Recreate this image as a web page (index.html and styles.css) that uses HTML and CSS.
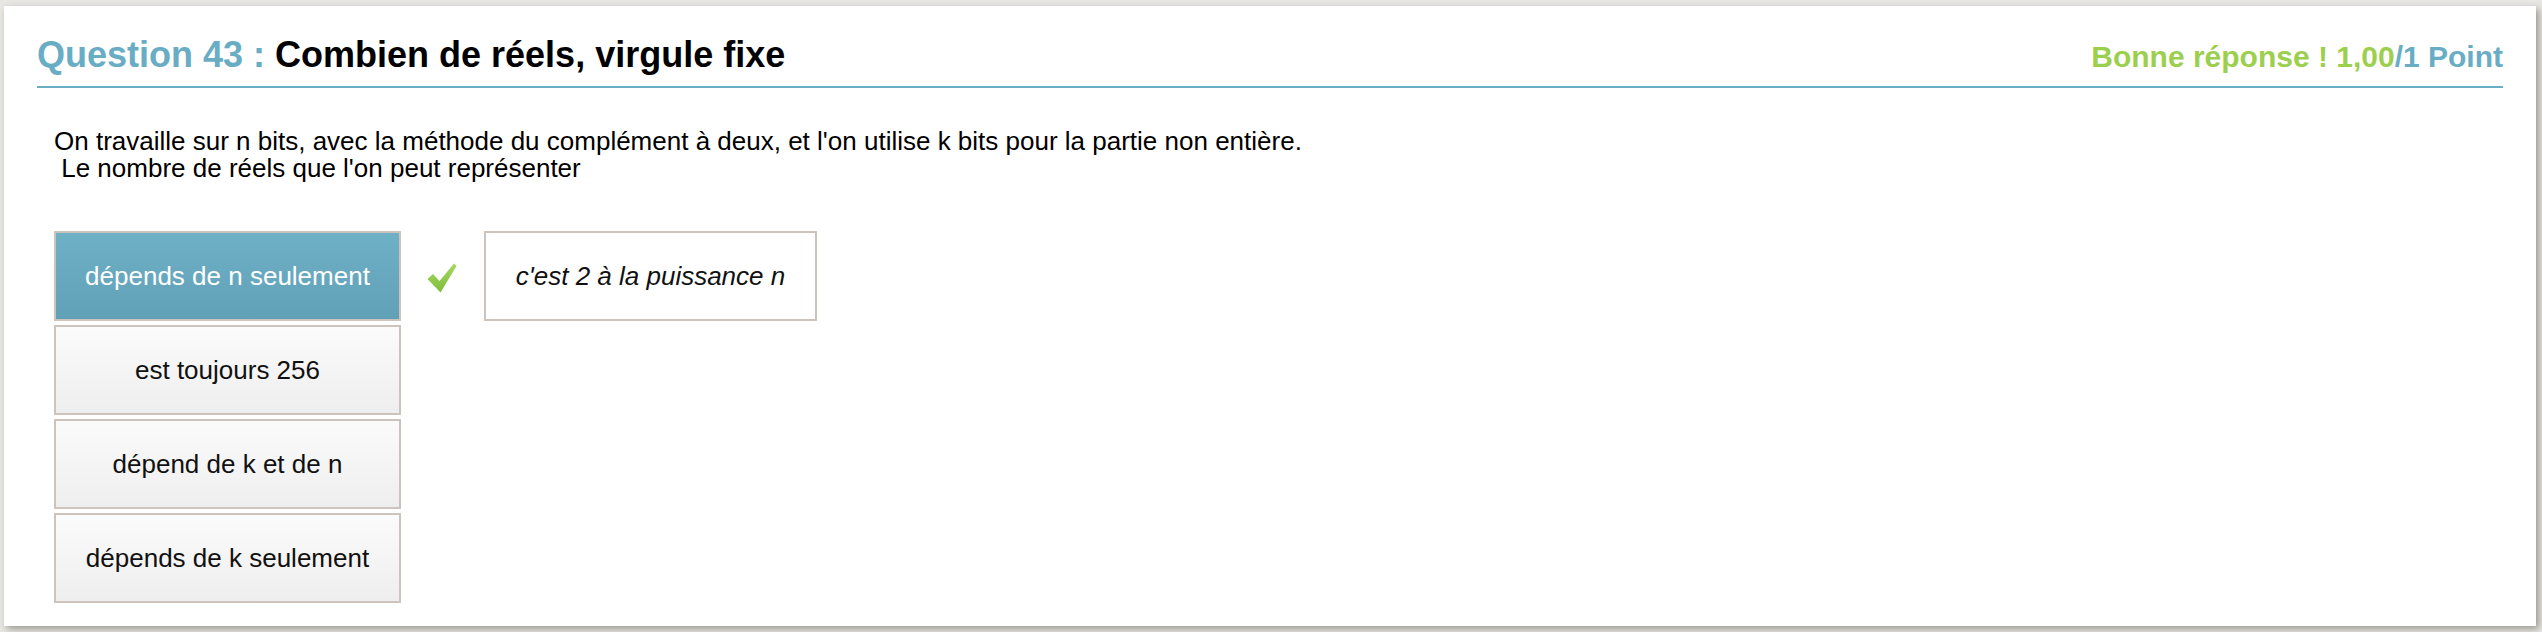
FILE: index.html
```html
<!DOCTYPE html>
<html lang="fr">
<head>
<meta charset="utf-8">
<title>Question 43</title>
<link rel="stylesheet" href="styles.css">
</head>
<body>
<div class="panel">
  <div class="header">
    <h1 class="title"><span class="qnum">Question 43 : </span>Combien de réels, virgule fixe</h1>
    <div class="score"><span class="good">Bonne réponse ! 1,00</span><span class="pts">/1 Point</span></div>
  </div>
  <p class="statement">On travaille sur n bits, avec la méthode du complément à deux, et l'on utilise k bits pour la partie non entière.<br><span class="indent"> Le nombre de réels que l'on peut représenter</span></p>
  <div class="answers">
    <div class="choices">
      <div class="choice selected">dépends de n seulement</div>
      <div class="choice">est toujours 256</div>
      <div class="choice">dépend de k et de n</div>
      <div class="choice">dépends de k seulement</div>
    </div>
    <div class="check">
      <svg width="30" height="30" viewBox="0 0 30 30">
        <defs>
          <linearGradient id="g" x1="0" y1="0" x2="0" y2="1">
            <stop offset="0" stop-color="#a6d95e"/>
            <stop offset="1" stop-color="#7dbd3c"/>
          </linearGradient>
        </defs>
        <path d="M0.5 16 L6 11 L12.5 18 L27 0.5 L29.5 3 L13.5 29.5 Z" fill="url(#g)"/>
      </svg>
    </div>
    <div class="explain">c'est 2 à la puissance n</div>
  </div>
</div>
</body>
</html>
```
FILE: styles.css
```css
html, body {
  margin: 0;
  padding: 0;
}
body {
  background: #e9e7e3;
  font-family: "Liberation Sans", Arial, sans-serif;
  padding: 6px 6px 6px 4px;
  height: 632px;
  box-sizing: border-box;
}
.panel {
  background: #ffffff;
  width: 2532px;
  height: 620px;
  box-sizing: border-box;
  box-shadow: 3px 3px 7px rgba(60, 55, 45, 0.45);
  padding: 29px 0 0 0;
}
.header {
  display: flex;
  justify-content: space-between;
  align-items: baseline;
  margin: 0 33px;
  padding-bottom: 9px;
  border-bottom: 2px solid #6aaec4;
}
.title {
  margin: 0;
  font-size: 36px;
  line-height: 40px;
  font-weight: bold;
  color: #000;
}
.qnum {
  color: #68adc4;
}
.score {
  font-size: 30px;
  line-height: 40px;
  font-weight: bold;
}
.good {
  color: #9dcf4f;
}
.pts {
  color: #68adc4;
}
.statement {
  margin: 40px 0 0 50px;
  font-size: 26px;
  line-height: 27px;
  color: #000;
}
.indent {
  white-space: pre;
}
.answers {
  display: flex;
  align-items: flex-start;
  margin: 49px 0 0 50px;
}
.choices {
  display: flex;
  flex-direction: column;
  gap: 4px;
}
.choice {
  width: 347px;
  height: 90px;
  box-sizing: border-box;
  border: 2px solid #ccc4bc;
  background: linear-gradient(#fbfbfb, #eeeeee);
  display: flex;
  align-items: center;
  justify-content: center;
  font-size: 26px;
  color: #111;
}
.choice.selected {
  background: linear-gradient(#6eb0c6, #61a1b7);
  color: #ffffff;
}
.check {
  width: 30px;
  height: 90px;
  margin: 0 27px 0 26px;
  display: flex;
  align-items: center;
}
.check svg {
  display: block;
  margin-top: 4px;
}
.explain {
  width: 333px;
  height: 90px;
  box-sizing: border-box;
  border: 2px solid #ccc4bc;
  background: #ffffff;
  display: flex;
  align-items: center;
  justify-content: center;
  font-size: 26px;
  font-style: italic;
  color: #111;
}
```
